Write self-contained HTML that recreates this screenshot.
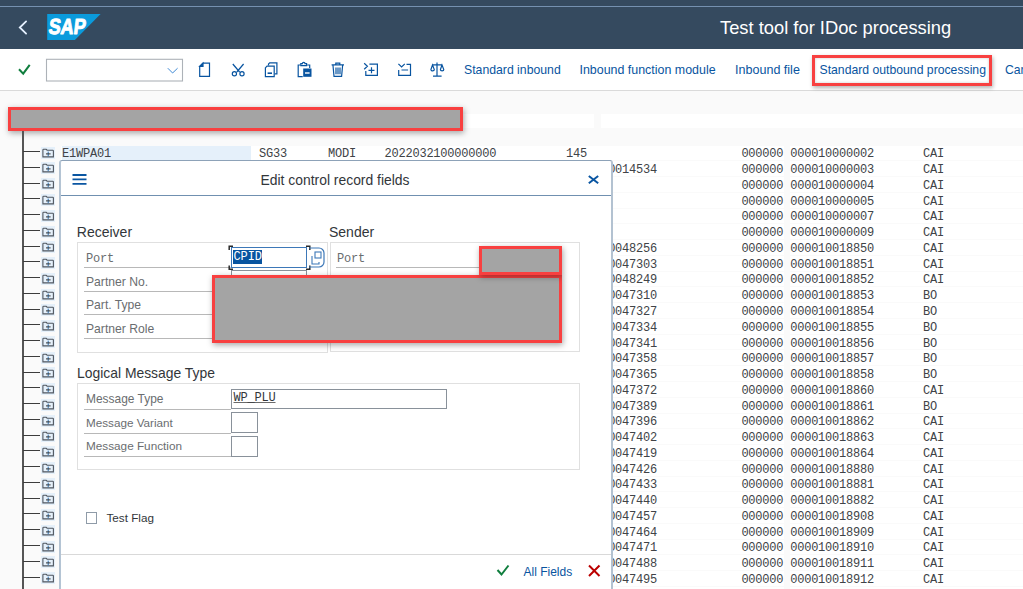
<!DOCTYPE html>
<html><head><meta charset="utf-8">
<style>
*{margin:0;padding:0;box-sizing:border-box}
html,body{width:1023px;height:589px;overflow:hidden;background:#fafafa;font-family:"Liberation Sans",sans-serif;position:relative}
.abs{position:absolute}
#shell{left:0;top:0;width:1023px;height:49px;background:#354a5f}
#shline{left:0;top:6px;width:1023px;height:1px;background:#7591b0}
#title{left:720px;top:17px;font-size:18.33px;color:#fff;white-space:nowrap}
#tb{left:0;top:49px;width:1023px;height:42px;background:#fff;border-bottom:1px solid #dadada}
.lnk{position:absolute;top:63px;font-size:12.2px;color:#0854a0;white-space:nowrap;line-height:15px}
.red{position:absolute;border:3px solid #f84040;background:#a4a4a4;box-shadow:1px 2px 6px rgba(0,0,0,.35)}
.redo{position:absolute;border:3px solid #f84040;box-shadow:1px 2px 4px rgba(0,0,0,.3),inset 0 0 3px rgba(0,0,0,.2)}
.row{position:absolute;left:0;width:1023px;height:15.77px}
.row:before{content:"";position:absolute;left:61px;right:0;top:0;bottom:1px;background:#fff}
.row:after{content:"";position:absolute;left:784px;width:6px;top:0;bottom:1px;background:#fafafa}
.hi{position:absolute;left:62px;width:189px;top:0;height:15px;background:#e5f0fa}
.t{position:absolute;top:1.8px;font-family:"Liberation Mono",monospace;font-size:12px;letter-spacing:-0.22px;line-height:15px;color:#404347;white-space:pre}
.hl{position:absolute;left:23px;width:17px;height:1px;background:#3c3c3c}
.ib{position:absolute;left:41px;width:14px;height:12px;background:#e5f0fa}
#vl{left:22.3px;top:131px;width:1.5px;height:460px;background:#555}
.ws{position:absolute;top:114px;height:14px;background:#fff}
/* dialog */
#dlg{left:59px;top:160px;width:554px;height:440px;background:#fff;border:1px solid #8da2b8;border-left:2px solid #b4c4d4;border-right:2px solid #b3c2d1;border-radius:3px 3px 0 0}
#dh{left:0;top:0;width:100%;height:35px;border-bottom:1px solid #7090b0}
#dtitle{left:199.5px;top:11px;font-size:13.9px;color:#32363a;white-space:nowrap;line-height:16px}
.sec{position:absolute;font-size:14px;color:#32363a;white-space:nowrap;line-height:16px}
.box{position:absolute;border:1px solid #e0e0e0;background:#fff}
.lbl{position:absolute;font-size:12.15px;color:#6a6d70;white-space:nowrap;line-height:14px}
.lblm{position:absolute;font-family:"Liberation Mono",monospace;font-size:12px;letter-spacing:-0.2px;color:#6a6d70;white-space:pre;line-height:14px}
.ul{position:absolute;height:1px;background:#b8b8b8}
.inp{position:absolute;border:1px solid #89919a;background:#fff}
</style></head><body>
<div id="shell" class="abs"></div>
<div id="shline" class="abs"></div>
<svg class="abs" style="left:0;top:0" width="120" height="49">
  <polyline points="26.1,21.4 19.8,27.5 26.1,33.6" fill="none" stroke="#e6f1ff" stroke-width="1.8" stroke-linecap="round"/>
  <polygon points="47.2,14 100.6,14 74.9,40 47.2,40" fill="#0b9bdc"/>
  <text x="0" y="0" transform="translate(47.9,33.9) skewX(-7)" font-family="Liberation Sans" font-weight="bold" font-size="22" fill="#fff" stroke="#fff" stroke-width="1" stroke-linejoin="round" textLength="37" lengthAdjust="spacingAndGlyphs">SAP</text>
</svg>
<div id="title" class="abs">Test tool for IDoc processing</div>
<div id="tb" class="abs"></div>
<!-- toolbar -->
<svg class="abs" style="left:0;top:49px" width="460" height="41">
  <polyline points="19,20.3 23.2,24.6 29.7,15.8" fill="none" stroke="#107e3e" stroke-width="2"/>
  <rect x="46.5" y="10.3" width="136" height="21.7" fill="#fff" stroke="#adb2b8" stroke-width="1.1"/>
  <polyline points="167.8,19.2 172.6,24 177.6,19.2" fill="none" stroke="#3f8ad6" stroke-width="1"/>
  <g fill="none" stroke="#0854a0" stroke-width="1.2">
    <path d="M199.7,17.4 l3.3,-3.3 h6.5 v13.3 h-9.8 z"/>
    <path d="M199.7,17.4 l3.3,-3.3 v3.3 z" fill="#0854a0"/>
    <circle cx="234.4" cy="24.7" r="2.1"/><circle cx="242" cy="24.7" r="2.1"/>
    <path d="M232.8,15 l6.8,8 M243.6,15 l-6.8,8"/>
    <path d="M268.5,16.5 v-1.5 l1.2,-1.2 h7.2 v11 h-2.2"/>
    <path d="M265.4,18.8 l1.6,-1.6 h7.2 v10.4 h-8.8 z"/>
    <rect x="267.6" y="23.4" width="4.4" height="1.6" fill="#0854a0" stroke="none"/>
    <path d="M300.5,16 h-2.3 v11.6 h4.5 M307.2,16 h2.5 v3"/>
    <path d="M300.8,16.6 v-2 h1.6 a1.3,1.3 0 0 1 2.6,0 h1.6 v2 z"/>
    <rect x="303.2" y="19.5" width="8.3" height="8.3" fill="#0854a0" stroke="none"/>
    <rect x="305" y="23.3" width="4.6" height="1.4" fill="#fff" stroke="none"/>
    <path d="M331.6,15.8 h12.4 M335.8,15.8 v-1.6 h4 v1.6 M333,16.5 l1,10.8 h7.6 l1,-10.8 M336,18.5 v6.8 M338,18.5 v6.8 M340,18.5 v6.8"/>
    <path d="M364.2,14.3 l3.2,3 l-3.2,3 M369.4,15.2 h8 v11.2 h-11.6 v-4.5 M371.5,18.3 v6 M368.5,21.3 h6"/>
    <path d="M398.4,14.8 l3.2,3.2 l3.2,-3.2 M406.5,15.3 h4 v11.1 h-11.8 v-5.4 M401.5,21 h6.6"/>
    <path d="M437,13.6 v13.3 M433,27.1 h8.6 M432.5,15.8 h9.6 M432.5,16 l-1.6,4.6 a1.7,1.3 0 0 0 3.4,0 z M442,16 l-1.6,4.6 a1.7,1.3 0 0 0 3.4,0 z"/>
  </g>
</svg>
<span class="lnk" style="left:464px;font-size:12.26px">Standard inbound</span>
<span class="lnk" style="left:579.5px;font-size:12.43px">Inbound function module</span>
<span class="lnk" style="left:735px;font-size:12.55px">Inbound file</span>
<span class="lnk" style="left:819.5px;font-size:12.23px">Standard outbound processing</span>
<span class="lnk" style="left:1005px">Cancel</span>
<div class="redo" style="left:812px;top:55px;width:180px;height:30.5px"></div>

<!-- header strip -->
<div class="ws" style="left:463px;width:131px"></div>
<div class="ws" style="left:601px;width:422px"></div>
<div class="red" style="left:8px;top:107px;width:455px;height:24px"></div>

<!-- table -->
<div class="row" style="top:145.60px">
<div class="hi"></div><span class="t" style="left:62px">E1WPA01</span><span class="t" style="left:259px">SG33</span><span class="t" style="left:328px">MODI</span><span class="t" style="left:384.5px">2022032100000000</span><span class="t" style="left:566px">145</span>
<span class="t" style="left:741.4px">000000</span><span class="t" style="left:790.2px">000010000002</span><span class="t" style="left:923px">CAI</span>
</div>
<div class="row" style="top:161.36px">
<span class="t" style="left:587.2px">0000014534</span>
<span class="t" style="left:741.4px">000000</span><span class="t" style="left:790.2px">000010000003</span><span class="t" style="left:923px">CAI</span>
</div>
<div class="row" style="top:177.12px">
<span class="t" style="left:741.4px">000000</span><span class="t" style="left:790.2px">000010000004</span><span class="t" style="left:923px">CAI</span>
</div>
<div class="row" style="top:192.88px">
<span class="t" style="left:741.4px">000000</span><span class="t" style="left:790.2px">000010000005</span><span class="t" style="left:923px">CAI</span>
</div>
<div class="row" style="top:208.64px">
<span class="t" style="left:741.4px">000000</span><span class="t" style="left:790.2px">000010000007</span><span class="t" style="left:923px">CAI</span>
</div>
<div class="row" style="top:224.40px">
<span class="t" style="left:741.4px">000000</span><span class="t" style="left:790.2px">000010000009</span><span class="t" style="left:923px">CAI</span>
</div>
<div class="row" style="top:240.16px">
<span class="t" style="left:587.2px">0000048256</span>
<span class="t" style="left:741.4px">000000</span><span class="t" style="left:790.2px">000010018850</span><span class="t" style="left:923px">CAI</span>
</div>
<div class="row" style="top:255.92px">
<span class="t" style="left:587.2px">0000047303</span>
<span class="t" style="left:741.4px">000000</span><span class="t" style="left:790.2px">000010018851</span><span class="t" style="left:923px">CAI</span>
</div>
<div class="row" style="top:271.68px">
<span class="t" style="left:587.2px">0000048249</span>
<span class="t" style="left:741.4px">000000</span><span class="t" style="left:790.2px">000010018852</span><span class="t" style="left:923px">CAI</span>
</div>
<div class="row" style="top:287.44px">
<span class="t" style="left:587.2px">0000047310</span>
<span class="t" style="left:741.4px">000000</span><span class="t" style="left:790.2px">000010018853</span><span class="t" style="left:923px">BO</span>
</div>
<div class="row" style="top:303.20px">
<span class="t" style="left:587.2px">0000047327</span>
<span class="t" style="left:741.4px">000000</span><span class="t" style="left:790.2px">000010018854</span><span class="t" style="left:923px">BO</span>
</div>
<div class="row" style="top:318.96px">
<span class="t" style="left:587.2px">0000047334</span>
<span class="t" style="left:741.4px">000000</span><span class="t" style="left:790.2px">000010018855</span><span class="t" style="left:923px">BO</span>
</div>
<div class="row" style="top:334.72px">
<span class="t" style="left:587.2px">0000047341</span>
<span class="t" style="left:741.4px">000000</span><span class="t" style="left:790.2px">000010018856</span><span class="t" style="left:923px">BO</span>
</div>
<div class="row" style="top:350.48px">
<span class="t" style="left:587.2px">0000047358</span>
<span class="t" style="left:741.4px">000000</span><span class="t" style="left:790.2px">000010018857</span><span class="t" style="left:923px">BO</span>
</div>
<div class="row" style="top:366.24px">
<span class="t" style="left:587.2px">0000047365</span>
<span class="t" style="left:741.4px">000000</span><span class="t" style="left:790.2px">000010018858</span><span class="t" style="left:923px">BO</span>
</div>
<div class="row" style="top:382.00px">
<span class="t" style="left:587.2px">0000047372</span>
<span class="t" style="left:741.4px">000000</span><span class="t" style="left:790.2px">000010018860</span><span class="t" style="left:923px">CAI</span>
</div>
<div class="row" style="top:397.76px">
<span class="t" style="left:587.2px">0000047389</span>
<span class="t" style="left:741.4px">000000</span><span class="t" style="left:790.2px">000010018861</span><span class="t" style="left:923px">BO</span>
</div>
<div class="row" style="top:413.52px">
<span class="t" style="left:587.2px">0000047396</span>
<span class="t" style="left:741.4px">000000</span><span class="t" style="left:790.2px">000010018862</span><span class="t" style="left:923px">CAI</span>
</div>
<div class="row" style="top:429.28px">
<span class="t" style="left:587.2px">0000047402</span>
<span class="t" style="left:741.4px">000000</span><span class="t" style="left:790.2px">000010018863</span><span class="t" style="left:923px">CAI</span>
</div>
<div class="row" style="top:445.04px">
<span class="t" style="left:587.2px">0000047419</span>
<span class="t" style="left:741.4px">000000</span><span class="t" style="left:790.2px">000010018864</span><span class="t" style="left:923px">CAI</span>
</div>
<div class="row" style="top:460.80px">
<span class="t" style="left:587.2px">0000047426</span>
<span class="t" style="left:741.4px">000000</span><span class="t" style="left:790.2px">000010018880</span><span class="t" style="left:923px">CAI</span>
</div>
<div class="row" style="top:476.56px">
<span class="t" style="left:587.2px">0000047433</span>
<span class="t" style="left:741.4px">000000</span><span class="t" style="left:790.2px">000010018881</span><span class="t" style="left:923px">CAI</span>
</div>
<div class="row" style="top:492.32px">
<span class="t" style="left:587.2px">0000047440</span>
<span class="t" style="left:741.4px">000000</span><span class="t" style="left:790.2px">000010018882</span><span class="t" style="left:923px">CAI</span>
</div>
<div class="row" style="top:508.08px">
<span class="t" style="left:587.2px">0000047457</span>
<span class="t" style="left:741.4px">000000</span><span class="t" style="left:790.2px">000010018908</span><span class="t" style="left:923px">CAI</span>
</div>
<div class="row" style="top:523.84px">
<span class="t" style="left:587.2px">0000047464</span>
<span class="t" style="left:741.4px">000000</span><span class="t" style="left:790.2px">000010018909</span><span class="t" style="left:923px">CAI</span>
</div>
<div class="row" style="top:539.60px">
<span class="t" style="left:587.2px">0000047471</span>
<span class="t" style="left:741.4px">000000</span><span class="t" style="left:790.2px">000010018910</span><span class="t" style="left:923px">CAI</span>
</div>
<div class="row" style="top:555.36px">
<span class="t" style="left:587.2px">0000047488</span>
<span class="t" style="left:741.4px">000000</span><span class="t" style="left:790.2px">000010018911</span><span class="t" style="left:923px">CAI</span>
</div>
<div class="row" style="top:571.12px">
<span class="t" style="left:587.2px">0000047495</span>
<span class="t" style="left:741.4px">000000</span><span class="t" style="left:790.2px">000010018912</span><span class="t" style="left:923px">CAI</span>
</div>
<div class="row" style="top:586.88px"></div>
<div id="vl" class="abs"></div>
<div class="hl" style="top:151.00px"></div><svg class="ib" style="top:146.70px" width="14" height="12"><path d="M1.9,9.9 V3 a0.7,0.7 0 0 1 0.7,-0.7 h2.6 l0.9,0.9 h5.6 a0.7,0.7 0 0 1 0.7,0.7 V9.9 z" fill="none" stroke="#4f5660" stroke-width="1.1"/><path d="M7.2,4.6 v4.6" stroke="#2a6fb0" stroke-width="1"/><path d="M5,6.9 h4.6" stroke="#333" stroke-width="1"/></svg>
<div class="hl" style="top:166.76px"></div><svg class="ib" style="top:162.46px" width="14" height="12"><path d="M1.9,9.9 V3 a0.7,0.7 0 0 1 0.7,-0.7 h2.6 l0.9,0.9 h5.6 a0.7,0.7 0 0 1 0.7,0.7 V9.9 z" fill="none" stroke="#4f5660" stroke-width="1.1"/><path d="M7.2,4.6 v4.6" stroke="#2a6fb0" stroke-width="1"/><path d="M5,6.9 h4.6" stroke="#333" stroke-width="1"/></svg>
<div class="hl" style="top:182.52px"></div><svg class="ib" style="top:178.22px" width="14" height="12"><path d="M1.9,9.9 V3 a0.7,0.7 0 0 1 0.7,-0.7 h2.6 l0.9,0.9 h5.6 a0.7,0.7 0 0 1 0.7,0.7 V9.9 z" fill="none" stroke="#4f5660" stroke-width="1.1"/><path d="M7.2,4.6 v4.6" stroke="#2a6fb0" stroke-width="1"/><path d="M5,6.9 h4.6" stroke="#333" stroke-width="1"/></svg>
<div class="hl" style="top:198.28px"></div><svg class="ib" style="top:193.98px" width="14" height="12"><path d="M1.9,9.9 V3 a0.7,0.7 0 0 1 0.7,-0.7 h2.6 l0.9,0.9 h5.6 a0.7,0.7 0 0 1 0.7,0.7 V9.9 z" fill="none" stroke="#4f5660" stroke-width="1.1"/><path d="M7.2,4.6 v4.6" stroke="#2a6fb0" stroke-width="1"/><path d="M5,6.9 h4.6" stroke="#333" stroke-width="1"/></svg>
<div class="hl" style="top:214.04px"></div><svg class="ib" style="top:209.74px" width="14" height="12"><path d="M1.9,9.9 V3 a0.7,0.7 0 0 1 0.7,-0.7 h2.6 l0.9,0.9 h5.6 a0.7,0.7 0 0 1 0.7,0.7 V9.9 z" fill="none" stroke="#4f5660" stroke-width="1.1"/><path d="M7.2,4.6 v4.6" stroke="#2a6fb0" stroke-width="1"/><path d="M5,6.9 h4.6" stroke="#333" stroke-width="1"/></svg>
<div class="hl" style="top:229.80px"></div><svg class="ib" style="top:225.50px" width="14" height="12"><path d="M1.9,9.9 V3 a0.7,0.7 0 0 1 0.7,-0.7 h2.6 l0.9,0.9 h5.6 a0.7,0.7 0 0 1 0.7,0.7 V9.9 z" fill="none" stroke="#4f5660" stroke-width="1.1"/><path d="M7.2,4.6 v4.6" stroke="#2a6fb0" stroke-width="1"/><path d="M5,6.9 h4.6" stroke="#333" stroke-width="1"/></svg>
<div class="hl" style="top:245.56px"></div><svg class="ib" style="top:241.26px" width="14" height="12"><path d="M1.9,9.9 V3 a0.7,0.7 0 0 1 0.7,-0.7 h2.6 l0.9,0.9 h5.6 a0.7,0.7 0 0 1 0.7,0.7 V9.9 z" fill="none" stroke="#4f5660" stroke-width="1.1"/><path d="M7.2,4.6 v4.6" stroke="#2a6fb0" stroke-width="1"/><path d="M5,6.9 h4.6" stroke="#333" stroke-width="1"/></svg>
<div class="hl" style="top:261.32px"></div><svg class="ib" style="top:257.02px" width="14" height="12"><path d="M1.9,9.9 V3 a0.7,0.7 0 0 1 0.7,-0.7 h2.6 l0.9,0.9 h5.6 a0.7,0.7 0 0 1 0.7,0.7 V9.9 z" fill="none" stroke="#4f5660" stroke-width="1.1"/><path d="M7.2,4.6 v4.6" stroke="#2a6fb0" stroke-width="1"/><path d="M5,6.9 h4.6" stroke="#333" stroke-width="1"/></svg>
<div class="hl" style="top:277.08px"></div><svg class="ib" style="top:272.78px" width="14" height="12"><path d="M1.9,9.9 V3 a0.7,0.7 0 0 1 0.7,-0.7 h2.6 l0.9,0.9 h5.6 a0.7,0.7 0 0 1 0.7,0.7 V9.9 z" fill="none" stroke="#4f5660" stroke-width="1.1"/><path d="M7.2,4.6 v4.6" stroke="#2a6fb0" stroke-width="1"/><path d="M5,6.9 h4.6" stroke="#333" stroke-width="1"/></svg>
<div class="hl" style="top:292.84px"></div><svg class="ib" style="top:288.54px" width="14" height="12"><path d="M1.9,9.9 V3 a0.7,0.7 0 0 1 0.7,-0.7 h2.6 l0.9,0.9 h5.6 a0.7,0.7 0 0 1 0.7,0.7 V9.9 z" fill="none" stroke="#4f5660" stroke-width="1.1"/><path d="M7.2,4.6 v4.6" stroke="#2a6fb0" stroke-width="1"/><path d="M5,6.9 h4.6" stroke="#333" stroke-width="1"/></svg>
<div class="hl" style="top:308.60px"></div><svg class="ib" style="top:304.30px" width="14" height="12"><path d="M1.9,9.9 V3 a0.7,0.7 0 0 1 0.7,-0.7 h2.6 l0.9,0.9 h5.6 a0.7,0.7 0 0 1 0.7,0.7 V9.9 z" fill="none" stroke="#4f5660" stroke-width="1.1"/><path d="M7.2,4.6 v4.6" stroke="#2a6fb0" stroke-width="1"/><path d="M5,6.9 h4.6" stroke="#333" stroke-width="1"/></svg>
<div class="hl" style="top:324.36px"></div><svg class="ib" style="top:320.06px" width="14" height="12"><path d="M1.9,9.9 V3 a0.7,0.7 0 0 1 0.7,-0.7 h2.6 l0.9,0.9 h5.6 a0.7,0.7 0 0 1 0.7,0.7 V9.9 z" fill="none" stroke="#4f5660" stroke-width="1.1"/><path d="M7.2,4.6 v4.6" stroke="#2a6fb0" stroke-width="1"/><path d="M5,6.9 h4.6" stroke="#333" stroke-width="1"/></svg>
<div class="hl" style="top:340.12px"></div><svg class="ib" style="top:335.82px" width="14" height="12"><path d="M1.9,9.9 V3 a0.7,0.7 0 0 1 0.7,-0.7 h2.6 l0.9,0.9 h5.6 a0.7,0.7 0 0 1 0.7,0.7 V9.9 z" fill="none" stroke="#4f5660" stroke-width="1.1"/><path d="M7.2,4.6 v4.6" stroke="#2a6fb0" stroke-width="1"/><path d="M5,6.9 h4.6" stroke="#333" stroke-width="1"/></svg>
<div class="hl" style="top:355.88px"></div><svg class="ib" style="top:351.58px" width="14" height="12"><path d="M1.9,9.9 V3 a0.7,0.7 0 0 1 0.7,-0.7 h2.6 l0.9,0.9 h5.6 a0.7,0.7 0 0 1 0.7,0.7 V9.9 z" fill="none" stroke="#4f5660" stroke-width="1.1"/><path d="M7.2,4.6 v4.6" stroke="#2a6fb0" stroke-width="1"/><path d="M5,6.9 h4.6" stroke="#333" stroke-width="1"/></svg>
<div class="hl" style="top:371.64px"></div><svg class="ib" style="top:367.34px" width="14" height="12"><path d="M1.9,9.9 V3 a0.7,0.7 0 0 1 0.7,-0.7 h2.6 l0.9,0.9 h5.6 a0.7,0.7 0 0 1 0.7,0.7 V9.9 z" fill="none" stroke="#4f5660" stroke-width="1.1"/><path d="M7.2,4.6 v4.6" stroke="#2a6fb0" stroke-width="1"/><path d="M5,6.9 h4.6" stroke="#333" stroke-width="1"/></svg>
<div class="hl" style="top:387.40px"></div><svg class="ib" style="top:383.10px" width="14" height="12"><path d="M1.9,9.9 V3 a0.7,0.7 0 0 1 0.7,-0.7 h2.6 l0.9,0.9 h5.6 a0.7,0.7 0 0 1 0.7,0.7 V9.9 z" fill="none" stroke="#4f5660" stroke-width="1.1"/><path d="M7.2,4.6 v4.6" stroke="#2a6fb0" stroke-width="1"/><path d="M5,6.9 h4.6" stroke="#333" stroke-width="1"/></svg>
<div class="hl" style="top:403.16px"></div><svg class="ib" style="top:398.86px" width="14" height="12"><path d="M1.9,9.9 V3 a0.7,0.7 0 0 1 0.7,-0.7 h2.6 l0.9,0.9 h5.6 a0.7,0.7 0 0 1 0.7,0.7 V9.9 z" fill="none" stroke="#4f5660" stroke-width="1.1"/><path d="M7.2,4.6 v4.6" stroke="#2a6fb0" stroke-width="1"/><path d="M5,6.9 h4.6" stroke="#333" stroke-width="1"/></svg>
<div class="hl" style="top:418.92px"></div><svg class="ib" style="top:414.62px" width="14" height="12"><path d="M1.9,9.9 V3 a0.7,0.7 0 0 1 0.7,-0.7 h2.6 l0.9,0.9 h5.6 a0.7,0.7 0 0 1 0.7,0.7 V9.9 z" fill="none" stroke="#4f5660" stroke-width="1.1"/><path d="M7.2,4.6 v4.6" stroke="#2a6fb0" stroke-width="1"/><path d="M5,6.9 h4.6" stroke="#333" stroke-width="1"/></svg>
<div class="hl" style="top:434.68px"></div><svg class="ib" style="top:430.38px" width="14" height="12"><path d="M1.9,9.9 V3 a0.7,0.7 0 0 1 0.7,-0.7 h2.6 l0.9,0.9 h5.6 a0.7,0.7 0 0 1 0.7,0.7 V9.9 z" fill="none" stroke="#4f5660" stroke-width="1.1"/><path d="M7.2,4.6 v4.6" stroke="#2a6fb0" stroke-width="1"/><path d="M5,6.9 h4.6" stroke="#333" stroke-width="1"/></svg>
<div class="hl" style="top:450.44px"></div><svg class="ib" style="top:446.14px" width="14" height="12"><path d="M1.9,9.9 V3 a0.7,0.7 0 0 1 0.7,-0.7 h2.6 l0.9,0.9 h5.6 a0.7,0.7 0 0 1 0.7,0.7 V9.9 z" fill="none" stroke="#4f5660" stroke-width="1.1"/><path d="M7.2,4.6 v4.6" stroke="#2a6fb0" stroke-width="1"/><path d="M5,6.9 h4.6" stroke="#333" stroke-width="1"/></svg>
<div class="hl" style="top:466.20px"></div><svg class="ib" style="top:461.90px" width="14" height="12"><path d="M1.9,9.9 V3 a0.7,0.7 0 0 1 0.7,-0.7 h2.6 l0.9,0.9 h5.6 a0.7,0.7 0 0 1 0.7,0.7 V9.9 z" fill="none" stroke="#4f5660" stroke-width="1.1"/><path d="M7.2,4.6 v4.6" stroke="#2a6fb0" stroke-width="1"/><path d="M5,6.9 h4.6" stroke="#333" stroke-width="1"/></svg>
<div class="hl" style="top:481.96px"></div><svg class="ib" style="top:477.66px" width="14" height="12"><path d="M1.9,9.9 V3 a0.7,0.7 0 0 1 0.7,-0.7 h2.6 l0.9,0.9 h5.6 a0.7,0.7 0 0 1 0.7,0.7 V9.9 z" fill="none" stroke="#4f5660" stroke-width="1.1"/><path d="M7.2,4.6 v4.6" stroke="#2a6fb0" stroke-width="1"/><path d="M5,6.9 h4.6" stroke="#333" stroke-width="1"/></svg>
<div class="hl" style="top:497.72px"></div><svg class="ib" style="top:493.42px" width="14" height="12"><path d="M1.9,9.9 V3 a0.7,0.7 0 0 1 0.7,-0.7 h2.6 l0.9,0.9 h5.6 a0.7,0.7 0 0 1 0.7,0.7 V9.9 z" fill="none" stroke="#4f5660" stroke-width="1.1"/><path d="M7.2,4.6 v4.6" stroke="#2a6fb0" stroke-width="1"/><path d="M5,6.9 h4.6" stroke="#333" stroke-width="1"/></svg>
<div class="hl" style="top:513.48px"></div><svg class="ib" style="top:509.18px" width="14" height="12"><path d="M1.9,9.9 V3 a0.7,0.7 0 0 1 0.7,-0.7 h2.6 l0.9,0.9 h5.6 a0.7,0.7 0 0 1 0.7,0.7 V9.9 z" fill="none" stroke="#4f5660" stroke-width="1.1"/><path d="M7.2,4.6 v4.6" stroke="#2a6fb0" stroke-width="1"/><path d="M5,6.9 h4.6" stroke="#333" stroke-width="1"/></svg>
<div class="hl" style="top:529.24px"></div><svg class="ib" style="top:524.94px" width="14" height="12"><path d="M1.9,9.9 V3 a0.7,0.7 0 0 1 0.7,-0.7 h2.6 l0.9,0.9 h5.6 a0.7,0.7 0 0 1 0.7,0.7 V9.9 z" fill="none" stroke="#4f5660" stroke-width="1.1"/><path d="M7.2,4.6 v4.6" stroke="#2a6fb0" stroke-width="1"/><path d="M5,6.9 h4.6" stroke="#333" stroke-width="1"/></svg>
<div class="hl" style="top:545.00px"></div><svg class="ib" style="top:540.70px" width="14" height="12"><path d="M1.9,9.9 V3 a0.7,0.7 0 0 1 0.7,-0.7 h2.6 l0.9,0.9 h5.6 a0.7,0.7 0 0 1 0.7,0.7 V9.9 z" fill="none" stroke="#4f5660" stroke-width="1.1"/><path d="M7.2,4.6 v4.6" stroke="#2a6fb0" stroke-width="1"/><path d="M5,6.9 h4.6" stroke="#333" stroke-width="1"/></svg>
<div class="hl" style="top:560.76px"></div><svg class="ib" style="top:556.46px" width="14" height="12"><path d="M1.9,9.9 V3 a0.7,0.7 0 0 1 0.7,-0.7 h2.6 l0.9,0.9 h5.6 a0.7,0.7 0 0 1 0.7,0.7 V9.9 z" fill="none" stroke="#4f5660" stroke-width="1.1"/><path d="M7.2,4.6 v4.6" stroke="#2a6fb0" stroke-width="1"/><path d="M5,6.9 h4.6" stroke="#333" stroke-width="1"/></svg>
<div class="hl" style="top:576.52px"></div><svg class="ib" style="top:572.22px" width="14" height="12"><path d="M1.9,9.9 V3 a0.7,0.7 0 0 1 0.7,-0.7 h2.6 l0.9,0.9 h5.6 a0.7,0.7 0 0 1 0.7,0.7 V9.9 z" fill="none" stroke="#4f5660" stroke-width="1.1"/><path d="M7.2,4.6 v4.6" stroke="#2a6fb0" stroke-width="1"/><path d="M5,6.9 h4.6" stroke="#333" stroke-width="1"/></svg>

<!-- dialog -->
<div id="dlg" class="abs">
  <div id="dh" class="abs">
    <svg class="abs" style="left:10.8px;top:13px" width="16" height="12"><path d="M0.5,1 h14 M0.5,5.4 h14 M0.5,9.8 h14" stroke="#0a56a2" stroke-width="1.8"/></svg>
    <div id="dtitle" class="abs">Edit control record fields</div>
    <svg class="abs" style="left:527px;top:14px" width="12" height="11"><path d="M0.8,1 L10.2,8.2 M10.2,1 L0.8,8.2" stroke="#0a56a2" stroke-width="2"/></svg>
  </div>
  <div class="sec" style="left:15.8px;top:62.8px">Receiver</div>
  <div class="sec" style="left:268px;top:62.8px">Sender</div>
  <div class="box" style="left:16.3px;top:80.5px;width:250.7px;height:111px"></div>
  <div class="box" style="left:268.8px;top:80.5px;width:250.5px;height:110.2px"></div>
  <div class="lblm" style="left:25px;top:90.5px">Port</div>
  <div class="lbl" style="left:25px;top:113.5px">Partner No.</div>
  <div class="lbl" style="left:25px;top:137.4px">Part. Type</div>
  <div class="lbl" style="left:25px;top:160.6px">Partner Role</div>
  <div class="ul" style="left:23px;top:105.6px;width:147px"></div>
  <div class="ul" style="left:23px;top:129.5px;width:147px"></div>
  <div class="ul" style="left:23px;top:153.2px;width:147px"></div>
  <div class="ul" style="left:23px;top:177px;width:147px"></div>
  <div class="lblm" style="left:276px;top:90.5px">Port</div>
  <div class="ul" style="left:274.7px;top:105.6px;width:144px"></div>
  <div class="inp" style="left:170px;top:109.2px;width:76px;height:22px"></div>
  <!-- port input -->
  <div class="inp" style="left:170px;top:85.7px;width:76px;height:21px;border:1.5px solid #3d78b8"></div>
  <div class="abs" style="left:172px;top:89.4px;width:29.3px;height:13.2px;background:#0854a0"></div>
  <div class="abs" style="left:172.5px;top:88.5px;font-family:'Liberation Mono',monospace;font-size:12px;letter-spacing:-0.1px;line-height:15px;color:#fff">CPID</div>
  <svg class="abs" style="left:166.5px;top:83.5px" width="84" height="26"><path d="M1.2,5 v-3.8 h3.8 M78,1.2 h3.8 v3.8 M1.2,20.5 v3.8 h3.8 M78,24.3 h3.8 v-3.8" fill="none" stroke="#2a2a2a" stroke-width="1.5"/></svg>
  <svg class="abs" style="left:246.5px;top:86px" width="20" height="22"><path d="M1,1 h10 a5,5 0 0 1 5,5 v9 a5,5 0 0 1 -5,5 h-10" fill="none" stroke="#3d78b8" stroke-width="1.2"/><path d="M4,9 v8 h7 v-2" fill="none" stroke="#3d78b8" stroke-width="1.1"/><rect x="7" y="5" width="6" height="6" fill="none" stroke="#3d78b8" stroke-width="1.1"/></svg>

  <div class="sec" style="left:16px;top:203.7px;font-size:13.9px">Logical Message Type</div>
  <div class="box" style="left:16.2px;top:222.2px;width:502.5px;height:86.5px"></div>
  <div class="lbl" style="left:25px;top:231.4px;font-size:11.95px">Message Type</div>
  <div class="lbl" style="left:25px;top:255px;font-size:11.7px">Message Variant</div>
  <div class="lbl" style="left:25px;top:278.2px;font-size:11.75px">Message Function</div>
  <div class="ul" style="left:23px;top:248px;width:147px"></div>
  <div class="ul" style="left:23px;top:272px;width:147px"></div>
  <div class="ul" style="left:23px;top:295px;width:147px"></div>
  <div class="inp" style="left:170.2px;top:227.8px;width:215.5px;height:20.3px"></div>
  <div class="abs" style="left:172.5px;top:229.5px;font-family:'Liberation Mono',monospace;font-size:12px;letter-spacing:-0.2px;line-height:15px;color:#32363a;text-decoration:underline;text-decoration-color:#6a6a6a">WP_PLU</div>
  <div class="inp" style="left:170.3px;top:251.2px;width:26.7px;height:20.6px"></div>
  <div class="inp" style="left:170.3px;top:275.2px;width:26.7px;height:20.4px"></div>

  <div class="abs" style="left:24.6px;top:351px;width:11.6px;height:11.6px;border:1px solid #8f9ba8;background:#fff"></div>
  <div class="lbl" style="left:45.5px;top:349.5px;color:#32363a;font-size:11.7px">Test Flag</div>
  <div class="abs" style="left:0;top:393px;width:100%;height:1px;background:#d9d9d9"></div>
  <svg class="abs" style="left:434.6px;top:403.2px" width="15" height="13"><polyline points="1.5,6 5.5,10.5 12.5,1.5" fill="none" stroke="#107e3e" stroke-width="2"/></svg>
  <div class="lbl" style="left:462.5px;top:403.7px;color:#0854a0;font-size:12px">All Fields</div>
  <svg class="abs" style="left:527px;top:403.2px" width="13" height="13"><path d="M1,1.5 l10.5,10.5 M11.5,1.5 l-10.5,10.5" stroke="#bb0000" stroke-width="2"/></svg>
</div>
<div class="red" style="left:212px;top:275px;width:350px;height:68px"></div>
<div class="red" style="left:479px;top:246px;width:83px;height:29px"></div>
</body></html>
